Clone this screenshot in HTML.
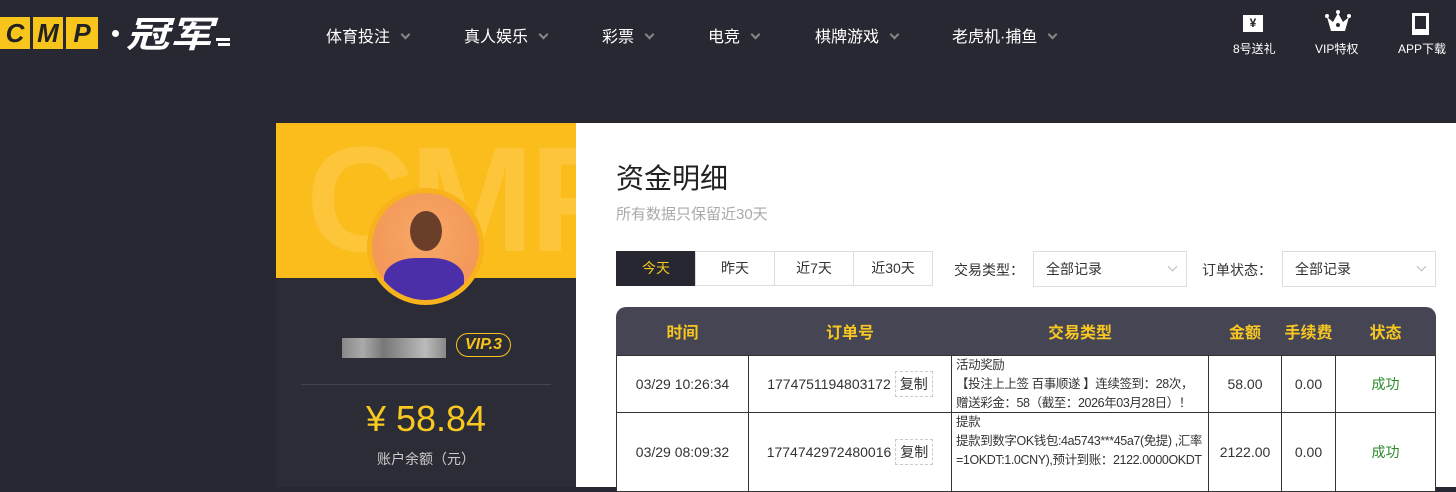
<!DOCTYPE html><html><head><meta charset="utf-8"><style>
*{margin:0;padding:0;box-sizing:border-box}
body{width:1456px;height:487px;overflow:hidden;background:#282832;font-family:"Liberation Sans","Noto Sans CJK SC",sans-serif;position:relative}
.a{position:absolute}
.nav{color:#fff;font-size:16px;top:23px}
.nav span{display:inline-block;width:7px;height:7px;border-right:2px solid #888;border-bottom:2px solid #888;transform:rotate(45deg);margin-left:12px;position:relative;top:-4px}
.ic{color:#fff;font-size:12px;text-align:center;top:40px}
table{border-collapse:collapse;font-size:14px;color:#333;table-layout:fixed}
td{border:1px solid #333;text-align:center;background:#fff;overflow:hidden}
th{background:#464553;color:#f8c820;font-size:16px;height:48px}
.btn{display:inline-block;border:1px dashed #ccc;padding:2px 4px;margin-left:4px}
.tl{text-align:left;font-size:12.5px;padding:0 4px;line-height:19px;letter-spacing:-0.4px}
.tl div{overflow:hidden}
.tab{top:251px;height:35px;border:1px solid #ddd;font-size:14px;text-align:center;line-height:33px;color:#333;background:#fff}
.sel{height:36px;border:1px solid #ddd;font-size:14px;line-height:34px;padding-left:12px;color:#333;top:251px;background:#fff}
.sel:after{content:"";position:absolute;right:10px;top:11px;width:6px;height:6px;border-right:1px solid #bbb;border-bottom:1px solid #bbb;transform:rotate(45deg)}
.lg{position:absolute;top:17px;height:32px;background:#f8c51c;font:italic bold 26px 'Liberation Sans';color:#222;text-align:center;line-height:32px}
</style></head><body>
<div class="lg" style="left:0;width:30px">C</div>
<div class="lg" style="left:33px;width:30px">M</div>
<div class="lg" style="left:66px;width:32px">P</div>
<div class="a" style="left:112px;top:30px;width:7px;height:7px;border-radius:50%;background:#fff"></div>
<div class="a" style="left:126px;top:12px;color:#fff;font:italic bold 36px 'Noto Sans CJK SC',sans-serif;line-height:40px;transform:scaleX(1.2);transform-origin:left">冠军</div>
<div class="a" style="left:216px;top:38px;width:14px;height:3px;background:#fff"></div>
<div class="a" style="left:218px;top:43px;width:12px;height:3px;background:#fff"></div>
<div class="a nav" style="left:326px">体育投注<span></span></div>
<div class="a nav" style="left:464px">真人娱乐<span></span></div>
<div class="a nav" style="left:602px">彩票<span></span></div>
<div class="a nav" style="left:708px">电竞<span></span></div>
<div class="a nav" style="left:815px">棋牌游戏<span></span></div>
<div class="a nav" style="left:952px">老虎机·捕鱼<span></span></div>
<div class="a" style="left:1243px;top:15px;width:20px;height:17px;background:#fff;color:#222;font-size:12px;text-align:center;font-weight:bold;line-height:17px">¥</div>
<div class="a ic" style="left:1233px">8号送礼</div>
<svg class="a" style="left:1325px;top:10px" width="26" height="24"><circle cx="2" cy="6" r="2" fill="#fff"/><circle cx="24" cy="6" r="2" fill="#fff"/><circle cx="13" cy="2" r="2" fill="#fff"/><path d="M2 7 L6 21 L20 21 L24 7 L18 12 L13 3 L8 12Z" fill="#fff"/><circle cx="13" cy="15" r="2" fill="#282832"/></svg>
<div class="a ic" style="left:1315px">VIP特权</div>
<div class="a" style="left:1412px;top:13px;width:17px;height:22px;border:3px solid #fff;border-bottom-width:6px"></div>
<div class="a ic" style="left:1398px">APP下载</div>

<div class="a" style="left:276px;top:123px;width:300px;height:364px;background:#2c2c36"></div>
<div class="a" style="left:276px;top:123px;width:300px;height:155px;background:#fbbd1c;overflow:hidden"><div style="font:bold 150px 'Liberation Sans';color:#fcc53a;position:absolute;left:30px;top:-10px;letter-spacing:-5px">CMP</div></div>
<div class="a" style="left:367px;top:188px;width:117px;height:117px;border-radius:50%;background:#f8b21c"></div>
<div class="a" style="left:372px;top:193px;width:107px;height:107px;border-radius:50%;background:radial-gradient(circle at 50% 40%,#f8a868,#f09050);overflow:hidden">
<div style="position:absolute;left:38px;top:18px;width:32px;height:40px;border-radius:50%;background:#6b3e2a"></div>
<div style="position:absolute;left:12px;top:65px;width:80px;height:50px;border-radius:40% 40% 0 0;background:#4a2fa8"></div></div>
<div class="a" style="left:342px;top:338px;width:104px;height:20px;background:linear-gradient(90deg,#888,#aaa,#777,#999,#bbb,#888)"></div>
<div class="a" style="left:456px;top:333px;width:55px;height:24px;border:1.5px solid #f8c51c;border-radius:12px;color:#f8c51c;font:italic bold 16px 'Liberation Sans';text-align:center;line-height:21px">VIP.3</div>
<div class="a" style="left:301px;top:384px;width:250px;height:1px;background:#444450"></div>
<div class="a" style="left:276px;top:398px;width:300px;text-align:center;color:#f8c820;font-size:36px">¥ 58.84</div>
<div class="a" style="left:276px;top:449px;width:300px;text-align:center;color:#ccc;font-size:14px">账户余额（元）</div>

<div class="a" style="left:576px;top:123px;width:880px;height:364px;background:#fff"></div>
<div class="a" style="left:616px;top:157px;font-size:28px;color:#222">资金明细</div>
<div class="a" style="left:616px;top:203px;font-size:15px;color:#aaa">所有数据只保留近30天</div>
<div class="a tab" style="left:616px;width:80px;background:#272731;color:#f8c820;border-color:#272731">今天</div>
<div class="a tab" style="left:695px;width:80px">昨天</div>
<div class="a tab" style="left:774px;width:80px">近7天</div>
<div class="a tab" style="left:853px;width:80px">近30天</div>
<div class="a" style="left:954px;top:260px;font-size:14px;color:#333">交易类型：</div>
<div class="a sel" style="left:1033px;width:154px">全部记录</div>
<div class="a" style="left:1202px;top:260px;font-size:14px;color:#333">订单状态：</div>
<div class="a sel" style="left:1282px;width:154px">全部记录</div>

<div class="a" style="left:616px;top:307px;width:820px;height:48px;background:#464553;border-radius:10px 10px 0 0"></div>
<table class="a" style="left:616px;top:307px;width:820px">
<tr><th style="width:132px;background:none">时间</th><th style="width:203px">订单号</th><th style="width:257px">交易类型</th><th style="width:73px">金额</th><th style="width:54px">手续费</th><th style="background:none">状态</th></tr>
<tr><td>03/29 10:26:34</td><td>1774751194803172<span class="btn">复制</span></td><td class="tl"><div style="height:56px">活动奖励<br>【投注上上签 百事顺遂 】连续签到：28次，赠送彩金：58（截至：2026年03月28日）！</div></td><td>58.00</td><td>0.00</td><td style="color:#2a8a2a">成功</td></tr>
<tr><td>03/29 08:09:32</td><td>1774742972480016<span class="btn">复制</span></td><td class="tl" style="vertical-align:top"><div style="height:78px">提款<br>提款到数字OK钱包:4a5743***45a7(免提) ,汇率=1OKDT:1.0CNY),预计到账：2122.0000OKDT</div></td><td>2122.00</td><td>0.00</td><td style="color:#2a8a2a">成功</td></tr>
</table>
</body></html>
